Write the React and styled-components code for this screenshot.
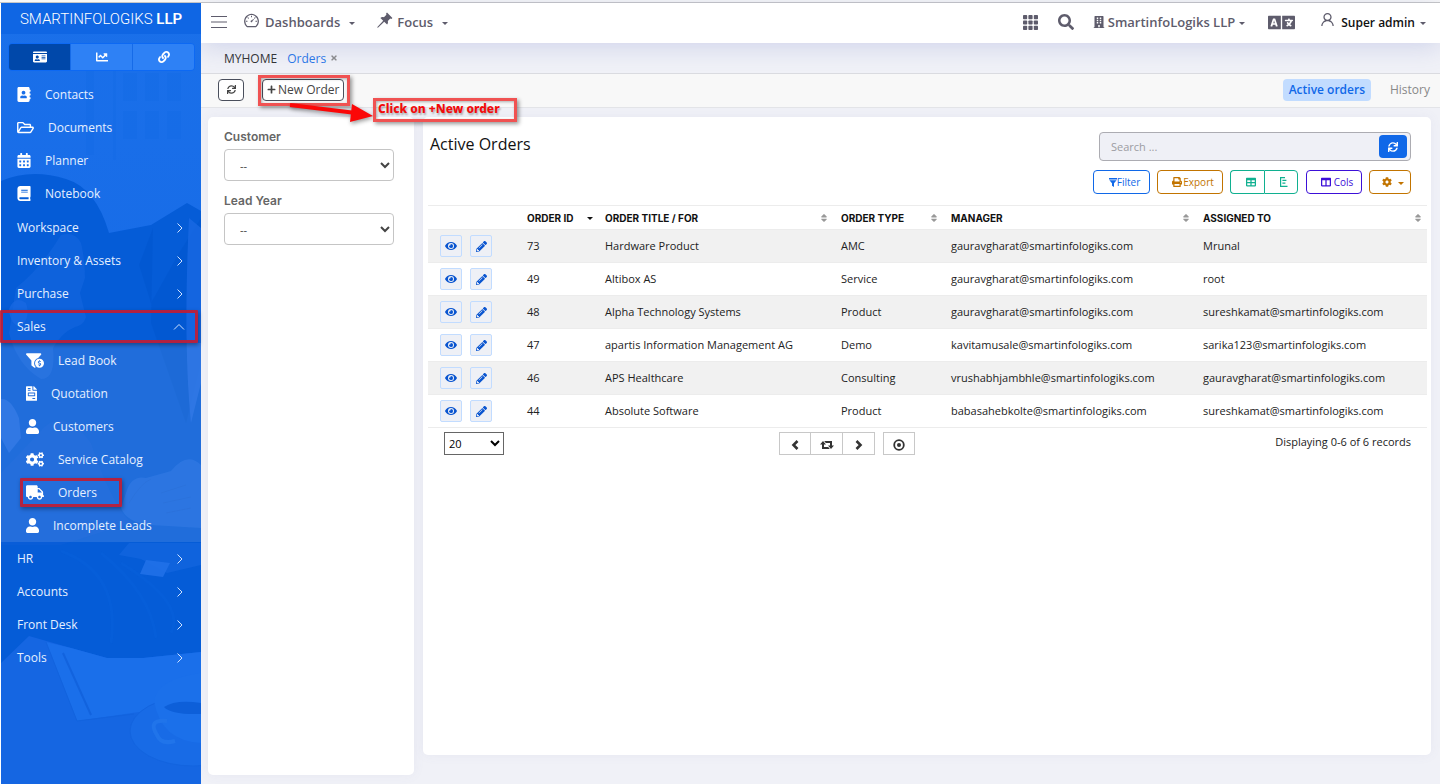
import React from "react";
import styled, { createGlobalStyle, css } from "styled-components";
import {
  FaIdCard, FaChartLine, FaLink, FaAddressBook, FaRegFolderOpen, FaCalendarAlt, FaBook,
  FaFunnelDollar, FaFileInvoice, FaUser, FaCogs, FaTruck, FaSearch, FaBuilding,
  FaLanguage, FaSync, FaPlus, FaPrint, FaTable, FaColumns, FaCog, FaEye, FaPencilAlt, FaSort,
  FaTimes,
} from "react-icons/fa";
import { AiOutlineDashboard, AiOutlineUser } from "react-icons/ai";

const sans = `"Open Sans", "Noto Sans", sans-serif`;

const GlobalStyle = createGlobalStyle`
  *, *::before, *::after { box-sizing: border-box; }
  body { margin: 0; background: #f0f1f7; font-family: ${sans}; font-size: 12px; color: #222; }
  button, input, select { font-family: inherit; margin: 0; }
  button { cursor: pointer; }
  a { text-decoration: none; color: inherit; }
  svg { display: block; flex: none; }
`;

const Page = styled.div`
  display: flex;
  min-height: 100vh;
  padding-left: 1px;
  border-top: 2px solid #f7f7f7;
  box-shadow: inset 0 1px 0 #c6c6c6, inset 1px 0 0 #fff;
  padding-top: 1px;
`;

/* ---------- sidebar ---------- */

const Sidebar = styled.aside`
  position: relative;
  z-index: 3;
  flex: 0 0 200px;
  background: #166be8;
  color: #e6f0ff;
`;

const Art = styled.svg`
  position: absolute;
  inset: 0;
  width: 100%;
  height: 100%;
`;

const SideBody = styled.div`
  position: relative;
`;

const Brand = styled.div`
  height: 31px;
  background: #0f66e4;
  text-align: center;
  line-height: 33px;
  font-family: Roboto, sans-serif;
  font-weight: 300;
  font-size: 15px;
  color: #fff;
  white-space: nowrap;
  b { font-weight: 600; }
`;

const SideTabs = styled.div`
  display: flex;
  margin: 9px 6px 7px 7px;
  border: 1px solid #0d69f3;
  border-radius: 4px;
  overflow: hidden;
`;

const SideTab = styled.button`
  flex: 1;
  height: 26px;
  display: flex;
  align-items: center;
  justify-content: center;
  border: 0;
  border-left: 1px solid #166be8;
  padding: 0;
  color: #fff;
  background: ${(p) => (p.$on ? "#0048aa" : "#2e81f5")};
  &:first-child { border-left: 0; }
`;

const Menu = styled.ul`
  list-style: none;
  margin: 0;
  padding: 0 0 1px;
`;

const SubMenu = styled(Menu)`
  padding: 1px 0 0;
  background: rgba(255, 255, 255, 0.11);
`;

const redBox = css`
  content: "";
  position: absolute;
  border: 3px solid rgba(192, 28, 52, 0.92);
  border-radius: 1px;
  box-shadow: 1px 2px 4px rgba(0, 0, 0, 0.35);
  pointer-events: none;
`;

const MenuItem = styled.li`
  position: relative;
  padding-left: ${(p) => (p.$sub ? 25 : 16)}px;
  ${(p) => p.$mark === "row" && css`&::after { ${redBox} inset: 0 3px 0 -1px; }`}
  ${(p) => p.$mark === "entry" && css`&::after { ${redBox} top: 2px; bottom: 2px; left: 19px; width: 102px; }`}
`;

const MenuLink = styled.a`
  display: flex;
  align-items: center;
  gap: 14px;
  height: 33px;
  padding-right: 16px;
  .arrow { margin-left: auto; color: #cfe2ff; }
`;

const MenuIcon = styled.span`
  color: #fff;
  svg { width: ${(p) => p.$w}px; height: ${(p) => p.$h}px; }
`;

/* ---------- top header ---------- */

const Main = styled.div`
  flex: 1;
  min-width: 0;
  display: flex;
  flex-direction: column;
`;

const Header = styled.header`
  position: relative;
  z-index: 2;
  display: flex;
  align-items: center;
  height: 40px;
  padding: 0 14px 2px 10px;
  background: #fff;
  box-shadow: 0 4px 24px rgba(90, 110, 190, 0.22);
  color: #5e5c6c;
`;

const IconButton = styled.button`
  display: flex;
  border: 0;
  padding: 0;
  background: none;
  color: inherit;
  margin-right: ${(p) => p.$gap}px;
`;

const NavItem = styled.button`
  display: flex;
  align-items: center;
  gap: ${(p) => p.$gap || 5}px;
  border: 0;
  padding: 0;
  margin-right: ${(p) => p.$after || 0}px;
  background: none;
  color: inherit;
  font-weight: 600;
  font-size: 13px;
  white-space: nowrap;
  svg { margin-bottom: ${(p) => p.$lift || 0}px; }
`;

const UserItem = styled(NavItem)`
  font-size: 12px;
  span { color: #111; }
`;

const Caret = styled.i`
  border: 3px solid transparent;
  border-top-color: currentColor;
  border-bottom: 0;
  margin-top: 2px;
  margin-left: ${(p) => p.$left || 0}px;
`;

const Push = styled.div`
  flex: 1;
`;

const TabBar = styled.nav`
  display: flex;
  align-items: center;
  gap: 10px;
  height: 31px;
  padding: 1px 23px;
  border-bottom: 1px solid #dadbe0;
`;

const HomeTab = styled.a`
  color: #333;
`;

const PageTab = styled.a`
  display: flex;
  align-items: center;
  gap: 4px;
  color: #2b78e8;
  svg { color: #8c8c8c; }
`;

const Toolbar = styled.div`
  display: flex;
  align-items: center;
  height: 34px;
  padding: 0 10px 2px 17px;
  background: #f8f8f8;
  border-bottom: 1px solid #e3e4e8;
`;

const ToolButton = styled.button`
  display: flex;
  align-items: center;
  justify-content: center;
  gap: 2px;
  height: 22px;
  min-width: 26px;
  padding: 0 4px;
  border: 1px solid #4a4f5c;
  border-radius: 4px;
  background: #fff;
  color: #444;
  font-size: 12px;
  white-space: nowrap;
`;

const Callout = styled.div`
  position: relative;
  z-index: 3;
  margin-left: 18px;
`;

const CalloutFrame = styled.span`
  position: absolute;
  border: 3px solid #f05252;
  box-shadow: 2px 2px 4px rgba(0, 0, 0, 0.4), inset 1px 1px 3px rgba(0, 0, 0, 0.3);
  pointer-events: none;
`;

const ButtonFrame = styled(CalloutFrame)`
  inset: -4px -6px -5px -4px;
`;

const NoteFrame = styled(CalloutFrame)`
  top: 19px;
  left: 111px;
  width: 144px;
  height: 24px;
  padding-left: 2px;
  line-height: 16px;
  font-family: "Noto Sans", sans-serif;
  font-weight: 800;
  font-size: 12px;
  color: #f20a0a;
  text-shadow: 1px 2px 2px rgba(0, 0, 0, 0.3);
  white-space: nowrap;
`;

const Arrow = styled.svg`
  position: absolute;
  top: 22px;
  left: 24px;
  pointer-events: none;
  filter: drop-shadow(1px 2px 2px rgba(0, 0, 0, 0.4));
`;

const ViewLink = styled.a`
  display: flex;
  align-items: center;
  height: 22px;
  border-radius: 4px;
  color: #888;
  margin-left: 19px;
  ${(p) => p.$on && css`
    padding: 0 6px;
    margin-left: 0;
    background: #c2dcff;
    color: #1068e8;
    font-weight: 600;
  `}
`;

/* ---------- content ---------- */

const Content = styled.main`
  flex: 1;
  display: flex;
  gap: 9px;
  padding: 9px 9px 9px 7px;
`;

const Card = styled.section`
  background: #fff;
  border-radius: 5px;
  box-shadow: 0 0 12px rgba(120, 120, 170, 0.07);
`;

const FilterCard = styled(Card)`
  flex: 0 0 206px;
  display: flex;
  flex-direction: column;
  gap: 12px;
  padding: 12px 20px 12px 16px;
`;

const Field = styled.label`
  display: flex;
  flex-direction: column;
  gap: 4px;
  line-height: 16px;
  font-family: Inter, sans-serif;
  font-weight: 600;
  font-size: 12px;
  color: #666;
`;

const FieldSelect = styled.select`
  height: 32px;
  padding: 0 0 0 11px;
  border: 1px solid #c5c5c5;
  border-radius: 4px;
  background: #fff;
  font-family: ${sans};
  font-size: 11px;
  color: #444;
`;

const OrdersCard = styled(Card)`
  flex: 1;
  min-width: 0;
  margin-bottom: 20px;
  padding: 15px 4px 8px 5px;
`;

const CardHead = styled.div`
  display: flex;
  justify-content: space-between;
  padding: 0 16px 11px 2px;
`;

const Title = styled.h1`
  margin: 0;
  font-weight: 400;
  font-size: 16px;
  line-height: 24px;
  color: #111;
`;

const Tools = styled.div`
  display: flex;
  flex-direction: column;
  align-items: flex-end;
  gap: 9px;
`;

const Search = styled.div`
  display: flex;
  align-items: center;
  width: 312px;
  height: 29px;
  padding-right: 3px;
  border: 1px solid #acacb2;
  border-radius: 4px;
  background: #eff0f6;
`;

const SearchInput = styled.input`
  flex: 1;
  min-width: 0;
  border: 0;
  outline: 0;
  padding: 0 11px;
  background: none;
  font-size: 11px;
  &::placeholder { color: #9c9ca2; opacity: 1; }
`;

const SearchButton = styled.button`
  display: flex;
  align-items: center;
  justify-content: center;
  width: 28px;
  height: 23px;
  border: 0;
  border-radius: 4px;
  padding: 0;
  background: #1068e8;
  color: #fff;
`;

const Actions = styled.div`
  display: flex;
  gap: 7px;
`;

const tones = { blue: "#1068e8", orange: "#c27400", teal: "#10b090", violet: "#3c10d8" };

const ActionButton = styled.button`
  display: flex;
  align-items: center;
  justify-content: center;
  gap: ${(p) => p.$gap || 0}px;
  width: ${(p) => p.$w}px;
  height: 24px;
  padding: 0 0 0 6px;
  border: 1px solid ${(p) => tones[p.$tone]};
  border-radius: 4px;
  background: #fff;
  color: ${(p) => tones[p.$tone]};
  font-size: 10px;
`;

const ButtonPair = styled.div`
  display: flex;
  margin-right: 1px;
  ${ActionButton}:first-child { border-radius: 4px 0 0 4px; border-right: 0; }
  ${ActionButton}:last-child { border-radius: 0 4px 4px 0; }
`;

const Table = styled.table`
  width: 100%;
  table-layout: fixed;
  border-collapse: collapse;
  border-top: 1px solid #ececec;
  border-bottom: 1px solid #ececec;
  font-size: 11px;
`;

const Th = styled.th`
  height: 24px;
  padding: 0 4px 0 8px;
  text-align: left;
  font-family: Inter, sans-serif;
  font-weight: 700;
  font-size: 10px;
  color: #111;
  white-space: nowrap;
`;

const ThInner = styled.div`
  display: flex;
  align-items: center;
  justify-content: space-between;
  svg { color: #999; }
`;

const Tr = styled.tr`
  height: 33px;
  border-top: 1px solid #ececec;
  &:nth-child(odd) { background: #f1f1f1; }
`;

const Td = styled.td`
  padding: 0 8px 1px;
  white-space: nowrap;
`;

const RowActions = styled.div`
  display: flex;
  gap: 8px;
  padding-left: 4px;
`;

const RowButton = styled.button`
  display: flex;
  align-items: center;
  justify-content: center;
  width: 22px;
  height: 22px;
  padding: 1px 0 0;
  border: 1px solid #c2dcff;
  border-radius: 2px;
  background: #eef0f6;
  color: #0a55d0;
`;

const Footer = styled.div`
  display: grid;
  grid-template-columns: 1fr 1fr 1fr;
  padding-top: 4px;
`;

const SizeSelect = styled.select`
  width: 60px;
  height: 23px;
  margin-left: 16px;
  padding: 0;
  border: 1px solid #666;
  border-radius: 0;
  background: #fff;
  font-size: 11px;
`;

const Pager = styled.div`
  display: flex;
  padding-left: 18px;
`;

const PagerButton = styled.button`
  display: flex;
  align-items: center;
  justify-content: center;
  width: ${(p) => (p.$joined ? 33 : 32)}px;
  height: 23px;
  padding: 2px 0 0;
  border: 1px solid #c8c8c8;
  background: #fff;
  color: #333;
  margin-left: ${(p) => (p.$joined ? -1 : p.$apart ? 8 : 0)}px;
`;

const Count = styled.div`
  padding-right: 16px;
  text-align: right;
  font-size: 11px;
  line-height: 20px;
`;

/* ---------- drawings ---------- */

const Chevron = ({ up }) =>
  up ? (
    <svg className="arrow" width="12" height="12" viewBox="0 0 12 12" fill="none" stroke="currentColor"><path d="M1 8.5 6 3.5l5 5" /></svg>
  ) : (
    <svg className="arrow" width="9" height="12" viewBox="0 0 9 12" fill="none" stroke="currentColor"><path d="M1.5 1.5 6 6 1.5 10.5" /></svg>
  );

const MenuBars = () => (
  <svg width="16" height="12" viewBox="0 0 16 12" stroke="currentColor"><path d="M0 .5h16M0 6h16M0 11.5h16" /></svg>
);

const Pin = () => (
  <svg width="16" height="16" viewBox="0 0 16 16" fill="currentColor">
    <path d="M10 .6 15.4 6l-1 .9-1.1-.3-2.5 2.5c.4 1.4.2 2.6-.7 3.5L7.2 9.8 1.2 15.4.2 15.8l.4-1L6.2 8.8 3.4 6c.9-.9 2.1-1.100 3.500-.7L9.400 2.800 9.100 1.500z" />
  </svg>
);

const GridDots = () => (
  <svg width="15" height="15" viewBox="0 0 15 15" fill="currentColor">
    {[0, 1, 2].map((r) => [0, 1, 2].map((c) => <rect key={`${r}${c}`} x={c * 5.4} y={r * 5.4} width="4.2" height="4.2" rx=".8" />))}
  </svg>
);

const Funnel = () => (
  <svg width="8" height="9" viewBox="0 0 8 9" fill="currentColor"><path d="M0 0h8v1.4H0zM.4 2.2h7.2L5 5.2V9L3 7.8V5.2z" /></svg>
);

const TreeList = () => (
  <svg width="8" height="10" viewBox="0 0 8 10" fill="none" stroke="currentColor" strokeWidth="1.2"><path d="M.6 0v10M.6.7H5M2.4 3.4h4M2.4 6.2h3M.6 9.3H7.5" /></svg>
);

const Step = ({ d }) => (
  <svg width="8" height="10" viewBox="0 0 8 10" fill="none" stroke="currentColor" strokeWidth="2.6"><path d={d} /></svg>
);

const Loop = () => (
  <svg width="14" height="10" viewBox="0 0 14 10" fill="currentColor">
    <path d="M3 1 6 4.600H4V7h4.200l1.600 2H2V4.600H0zM11 9 8 5.400h2V3H5.800L4.200 1H12v4.400h2z" />
  </svg>
);

const Target = () => (
  <svg width="12" height="12" viewBox="0 0 12 12"><circle cx="6" cy="6" r="4.800" fill="none" stroke="currentColor" strokeWidth="1.800" /><circle cx="6" cy="6" r="2" fill="currentColor" /></svg>
);

const SidebarArt = () => (
  <Art viewBox="0 0 200 781" preserveAspectRatio="xMidYMid slice" aria-hidden="true">
    <defs>
      <linearGradient id="sky" x1="0" y1="0" x2="0" y2="1">
        <stop offset="0" stopColor="#1a70ea" />
        <stop offset="1" stopColor="#1465e2" />
      </linearGradient>
    </defs>
    <rect width="200" height="781" fill="url(#sky)" />
    <g fill="#1067e2" opacity=".25">
      <path d="M85 62h8v90h-8zM112 62h3v95h-3zM122 70h14v28h-14zM144 70h14v28h-14zM166 70h14v28h-14zM122 108h14v28h-14zM144 108h14v28h-14zM166 108h14v28h-14z" />
    </g>
    <path d="M0 178Q30 165 65 176Q95 185 108 230L150 222L186 200L200 208V662H0z" fill="#055cd7" />
    <path d="M15 285Q40 265 60 232Q74 228 80 240Q84 256 84 275L79 290L85 314Q83 322 74 324Q60 330 52 345Q55 376 40 376Q16 362 8 330z" fill="#1264dd" opacity=".75" />
    <path d="M8 306Q14 292 25 300Q30 314 20 324Q9 322 8 306" fill="#1a6ae2" opacity=".7" />
    <path d="M152 225L138 262L150 300L178 250L200 215V360L185 420L150 320z" fill="#0054cc" opacity=".45" />
    <path d="M188 215L200 225V380L190 420Q182 340 188 215" fill="#1969e3" opacity=".8" />
    <path d="M0 396Q10 395 18 415L20 435L8 450L0 435z" fill="#1d6ce4" opacity=".8" />
    <path d="M38 430Q60 400 90 440Q110 500 130 520L60 542H0V470z" fill="#0f60da" opacity=".4" />
    <path d="M125 490Q130 472 145 475L170 468Q186 448 200 462V525L150 522Q126 520 120 505z" fill="#1b6be2" opacity=".6" />
    <path d="M128 500Q140 480 150 476M160 490L185 482M162 500L190 494M165 510L190 505" stroke="#1059cc" fill="none" opacity=".35" />
    <path d="M118 552L128 540H200V562L166 570L140 556z" fill="#1265de" opacity=".8" />
    <path d="M145 557L169 560L162 574L139 571z" fill="#2070e8" opacity=".9" />
    <path d="M60 548Q120 570 110 640M100 550Q150 590 155 635M120 560Q185 600 170 630" stroke="#0a60dc" strokeWidth="3" fill="none" opacity=".35" />
    <path d="M0 660L28 633L70 645L106 655H142L200 649V781H0z" fill="#1566e2" />
    <path d="M45 639L70 645L106 655H142L200 649V700L76 718z" fill="#1a6fea" />
    <path d="M45 639L76 718L133 711" fill="none" stroke="#1263de" strokeWidth="1" />
    <path d="M62 650L90 712" stroke="#1263de" strokeWidth="2" />
    <ellipse cx="192" cy="728" rx="63" ry="35" fill="#186be6" stroke="#1364df" />
    <path d="M153 698Q156 676 200 670V740Q160 738 153 698" fill="#1b70ea" />
    <path d="M163 704Q175 696 200 700V711Q170 712 163 704" fill="#0d5fd9" />
    <path d="M166 718Q146 716 156 732Q160 742 174 738" fill="none" stroke="#2074ea" strokeWidth="4" />
  </Art>
);

/* ---------- data ---------- */

const topLinks = [
  ["Contacts", FaAddressBook, 14, 15],
  ["Documents", FaRegFolderOpen, 17, 15],
  ["Planner", FaCalendarAlt, 14, 15],
  ["Notebook", FaBook, 14, 15],
];
const salesLinks = [
  ["Lead Book", FaFunnelDollar, 18, 15],
  ["Quotation", FaFileInvoice, 11, 15],
  ["Customers", FaUser, 13, 15],
  ["Service Catalog", FaCogs, 18, 15],
  ["Orders", FaTruck, 18, 15],
  ["Incomplete Leads", FaUser, 13, 15],
];
const columns = [
  ["ORDER ID", 78], ["ORDER TITLE / FOR", 236], ["ORDER TYPE", 110], ["MANAGER", 252], ["ASSIGNED TO", null],
];
const orders = [
  ["73", "Hardware Product", "AMC", "gauravgharat@smartinfologiks.com", "Mrunal"],
  ["49", "Altibox AS", "Service", "gauravgharat@smartinfologiks.com", "root"],
  ["48", "Alpha Technology Systems", "Product", "gauravgharat@smartinfologiks.com", "sureshkamat@smartinfologiks.com"],
  ["47", "apartis Information Management AG", "Demo", "kavitamusale@smartinfologiks.com", "sarika123@smartinfologiks.com"],
  ["46", "APS Healthcare", "Consulting", "vrushabhjambhle@smartinfologiks.com", "gauravgharat@smartinfologiks.com"],
  ["44", "Absolute Software", "Product", "babasahebkolte@smartinfologiks.com", "sureshkamat@smartinfologiks.com"],
];

const Entry = ({ label, icon: Icon, w, h, sub, mark }) => (
  <MenuItem $sub={sub} $mark={mark}>
    <MenuLink href="#">
      <MenuIcon $w={w} $h={h}><Icon /></MenuIcon>
      {label}
    </MenuLink>
  </MenuItem>
);

const Group = ({ label, open, mark }) => (
  <MenuItem $mark={mark}>
    <MenuLink href="#">
      {label}
      <Chevron up={open} />
    </MenuLink>
  </MenuItem>
);

export default function App() {
  return (
    <>
      <GlobalStyle />
      <Page>
        <Sidebar>
          <SidebarArt />
          <SideBody>
            <Brand>SMARTINFOLOGIKS <b>LLP</b></Brand>
            <SideTabs>
              <SideTab $on aria-label="Menu"><FaIdCard size={14} /></SideTab>
              <SideTab aria-label="Reports"><FaChartLine size={12} /></SideTab>
              <SideTab aria-label="Links"><FaLink size={12} /></SideTab>
            </SideTabs>
            <Menu>
              {topLinks.map(([l, i, w, h]) => <Entry key={l} label={l} icon={i} w={w} h={h} />)}
            </Menu>
            <Menu>
              <Group label="Workspace" />
              <Group label="Inventory & Assets" />
              <Group label="Purchase" />
              <Group label="Sales" open mark="row" />
              <li>
                <SubMenu>
                  {salesLinks.map(([l, i, w, h]) => (
                    <Entry key={l} label={l} icon={i} w={w} h={h} sub mark={l === "Orders" ? "entry" : undefined} />
                  ))}
                </SubMenu>
              </li>
              <Group label="HR" />
              <Group label="Accounts" />
              <Group label="Front Desk" />
              <Group label="Tools" />
            </Menu>
          </SideBody>
        </Sidebar>

        <Main>
          <Header>
            <IconButton $gap={16} aria-label="Toggle menu"><MenuBars /></IconButton>
            <NavItem $after={22} $lift={4}><AiOutlineDashboard size={17} />Dashboards<Caret $left={4} /></NavItem>
            <NavItem $gap={4} $lift={4}><Pin />Focus<Caret $left={5} /></NavItem>
            <Push />
            <IconButton $gap={20} aria-label="Apps"><GridDots /></IconButton>
            <IconButton $gap={19} aria-label="Search"><FaSearch size={16} /></IconButton>
            <NavItem $gap={3} $after={23}><FaBuilding size={12} />SmartinfoLogiks LLP<Caret $left={1} /></NavItem>
            <IconButton $gap={24} aria-label="Language"><FaLanguage size={27} /></IconButton>
            <UserItem $gap={5} $lift={6}><AiOutlineUser size={17} /><span>Super admin</span><Caret /></UserItem>
          </Header>

          <TabBar>
            <HomeTab href="#">MYHOME</HomeTab>
            <PageTab href="#">Orders <FaTimes size={8} /></PageTab>
          </TabBar>

          <Toolbar>
            <ToolButton aria-label="Refresh"><FaSync size={9} /></ToolButton>
            <Callout>
              <ToolButton><FaPlus size={9} />New Order</ToolButton>
              <ButtonFrame />
              <Arrow width="90" height="26" viewBox="0 0 90 26">
                <path d="M4 4 70 12" stroke="#fb0707" strokeWidth="4" />
                <path d="M66 3 87 15 64 21z" fill="#fb0707" />
              </Arrow>
              <NoteFrame>Click on +New order</NoteFrame>
            </Callout>
            <Push />
            <ViewLink href="#" $on>Active orders</ViewLink>
            <ViewLink href="#">History</ViewLink>
          </Toolbar>

          <Content>
            <FilterCard>
              <Field>Customer<FieldSelect><option>--</option></FieldSelect></Field>
              <Field>Lead Year<FieldSelect><option>--</option></FieldSelect></Field>
            </FilterCard>

            <OrdersCard>
              <CardHead>
                <Title>Active Orders</Title>
                <Tools>
                  <Search>
                    <SearchInput placeholder="Search ..." aria-label="Search orders" />
                    <SearchButton aria-label="Reload"><FaSync size={10} /></SearchButton>
                  </Search>
                  <Actions>
                    <ActionButton $tone="blue" $w={57}><Funnel />Filter</ActionButton>
                    <ActionButton $tone="orange" $w={66} $gap={1}><FaPrint size={10} />Export</ActionButton>
                    <ButtonPair>
                      <ActionButton $tone="teal" $w={34} aria-label="Table view"><FaTable size={10} /></ActionButton>
                      <ActionButton $tone="teal" $w={34} aria-label="Tree view"><TreeList /></ActionButton>
                    </ButtonPair>
                    <ActionButton $tone="violet" $w={56} $gap={3}><FaColumns size={10} />Cols</ActionButton>
                    <ActionButton $tone="orange" $w={42} $gap={6} aria-label="Settings"><FaCog size={10} /><Caret /></ActionButton>
                  </Actions>
                </Tools>
              </CardHead>

              <Table>
                <colgroup>
                  <col width="91" />
                  {columns.map(([c, w]) => <col key={c} width={w || undefined} />)}
                </colgroup>
                <thead>
                  <tr>
                    <Th />
                    {columns.map(([c], i) => (
                      <Th key={c}><ThInner>{c}{i === 0 ? <Caret /> : <FaSort size={10} />}</ThInner></Th>
                    ))}
                  </tr>
                </thead>
                <tbody>
                  {orders.map((row) => (
                    <Tr key={row[0]}>
                      <Td>
                        <RowActions>
                          <RowButton aria-label={`View order ${row[0]}`}><FaEye size={12} /></RowButton>
                          <RowButton aria-label={`Edit order ${row[0]}`}><FaPencilAlt size={11} /></RowButton>
                        </RowActions>
                      </Td>
                      {row.map((cell, i) => <Td key={i}>{cell}</Td>)}
                    </Tr>
                  ))}
                </tbody>
              </Table>

              <Footer>
                <SizeSelect aria-label="Rows per page"><option>20</option></SizeSelect>
                <Pager>
                  <PagerButton aria-label="Previous page"><Step d="M6.500 1 2.500 5l4 4" /></PagerButton>
                  <PagerButton $joined aria-label="Reload page"><Loop /></PagerButton>
                  <PagerButton $joined aria-label="Next page"><Step d="M1.500 1l4 4-4 4" /></PagerButton>
                  <PagerButton $apart aria-label="Show all"><Target /></PagerButton>
                </Pager>
                <Count>Displaying 0-6 of 6 records</Count>
              </Footer>
            </OrdersCard>
          </Content>
        </Main>
      </Page>
    </>
  );
}
